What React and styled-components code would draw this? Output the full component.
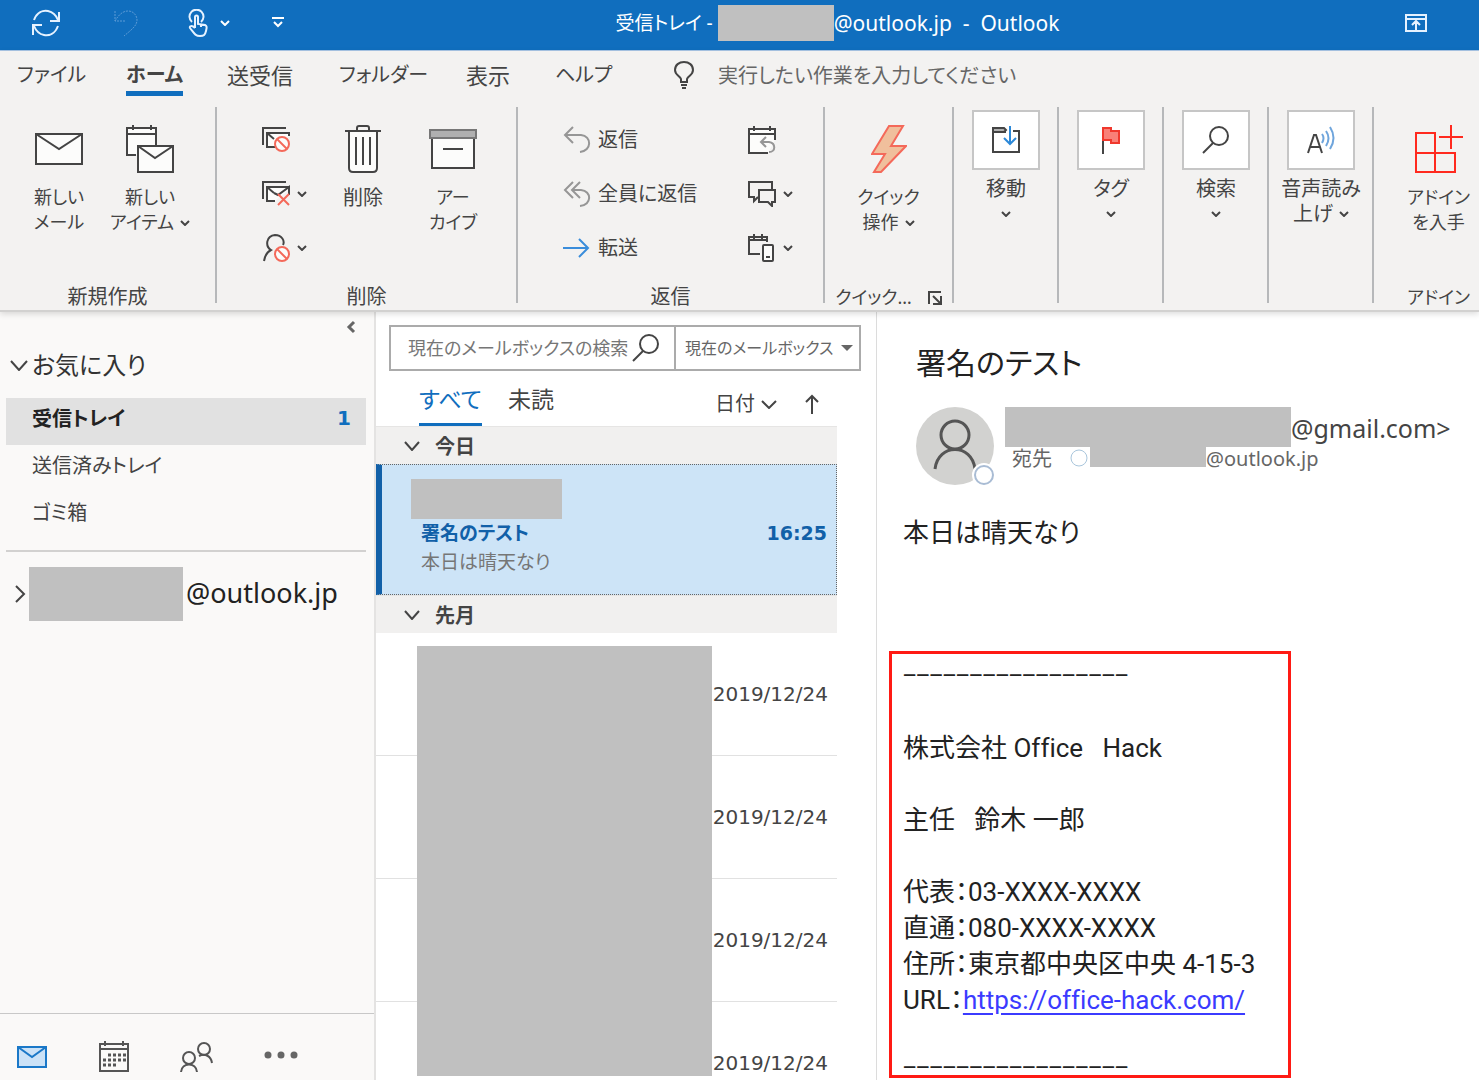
import React from "react";
import styled, { createGlobalStyle, css } from "styled-components";

const INK = "#444444";
const BLUE = "#106ebe";
const MASK = "#c0c0c0";

const GlobalStyle = createGlobalStyle`
  *, *::before, *::after { box-sizing: border-box; }
  body {
    margin: 0;
    overflow: hidden;
    background: #ffffff;
    color: ${INK};
    font-family: "Noto Sans", "Noto Sans CJK JP", sans-serif;
    font-size: 20px;
    font-feature-settings: "palt";
  }
  button, input, select {
    margin: 0;
    padding: 0;
    border: 0;
    background: none;
    color: inherit;
    font-family: inherit;
    font-size: inherit;
    font-feature-settings: "palt";
  }
  p, h1, h2, ul { margin: 0; padding: 0; font-weight: 400; }
  ul { list-style: none; }
  svg { display: block; flex: none; }
`;

const Page = styled.div`
  display: flex;
  flex-direction: column;
  height: 100vh;
`;

/* ---------- title bar ---------- */

const TitleBar = styled.header`
  display: flex;
  align-items: center;
  height: 51px;
  padding-bottom: 5px;
  background: ${BLUE};
  border-bottom: 1px solid #a9c6e6;
  color: #ffffff;
`;

const QuickTools = styled.div`
  display: flex;
  align-items: center;
  padding: 0 8px 0 30px;
`;

const ToolButton = styled.button`
  display: flex;
  align-items: center;
  gap: 12px;
  margin-right: ${(p) => p.$gap}px;
`;

const WindowTitle = styled.h1`
  flex: 1;
  display: flex;
  align-items: center;
  justify-content: center;
  font-size: 21px;
  line-height: 36px;
  white-space: pre;
`;

const TitleFolder = styled.span`
  font-size: 19px;
`;

const Masked = styled.span`
  flex: none;
  width: ${(p) => p.$w}px;
  height: ${(p) => p.$h}px;
  background: ${MASK};
`;

const RibbonToggle = styled.button`
  display: flex;
  margin: 0 52px 0 22px;
`;

/* ---------- ribbon ---------- */

const Ribbon = styled.section`
  position: relative;
  z-index: 1;
  flex: none;
  background: #f3f2f1;
  border-bottom: 2px solid #d2d1d0;
  box-shadow: 0 2px 6px rgba(0, 0, 0, 0.14);
`;

const TabBar = styled.nav`
  display: flex;
  align-items: flex-start;
  height: 56px;
  padding: 8px 17px 0;
`;

const TabCell = styled.div`
  width: ${(p) => p.$w}px;
  display: flex;
`;

const Tab = styled.button`
  height: 37px;
  padding-bottom: 5px;
  line-height: 32px;
  font-size: ${(p) => (p.$kana ? 20 : 22)}px;
  white-space: nowrap;
  ${(p) =>
    p.$on &&
    css`
      padding-bottom: 0;
      font-weight: 700;
      border-bottom: 5px solid ${BLUE};
    `}
`;

const TellMe = styled.label`
  flex: 1;
  display: flex;
  align-items: center;
  gap: 24px;
  height: 32px;
`;

const TellMeInput = styled.input`
  flex: 1;
  height: 32px;
  font-size: 20px;
  &::placeholder {
    color: #666666;
    opacity: 1;
  }
`;

const Groups = styled.div`
  display: flex;
  height: 203px;
  padding-bottom: 7px;
`;

const Group = styled.div`
  flex: 0 0 ${(p) => p.$w}px;
  display: flex;
  flex-direction: column;
  border-right: 2px solid #b6b8ba;
`;

const LastGroup = styled(Group)`
  flex: 1 0 104px;
  padding-left: 24px;
  border-right: 0;
`;

const GroupBody = styled.div`
  flex: 1;
  display: flex;
  justify-content: ${(p) => p.$justify || "center"};
  padding: ${(p) => p.$pad || "0"};
`;

const GroupLabel = styled.div`
  display: flex;
  align-items: flex-start;
  justify-content: center;
  gap: 16px;
  height: 16px;
  font-size: ${(p) => (p.$kana ? 18 : 20)}px;
  line-height: 20px;
  white-space: nowrap;
`;

const LauncherButton = styled.button`
  display: flex;
  padding-top: 4px;
`;

const BigButton = styled.button`
  display: flex;
  flex-direction: column;
  align-items: center;
  width: ${(p) => p.$w || 90}px;
  padding-top: 17px;
  font-size: ${(p) => (p.$kana ? 18 : 20)}px;
  line-height: 25px;
  white-space: nowrap;
`;

const BigIcon = styled.span`
  display: flex;
  align-items: center;
  justify-content: center;
  height: 50px;
  margin-bottom: 11px;
`;

const LabelLine = styled.span`
  display: flex;
  align-items: center;
  gap: 6px;
  height: 25px;
`;

const SmallColumn = styled.div`
  display: flex;
  flex-direction: column;
  gap: 22px;
  width: ${(p) => p.$w}px;
  padding-top: 17px;
`;

const SmallButton = styled.button`
  display: flex;
  align-items: center;
  gap: 7px;
  height: 32px;
  line-height: 32px;
  white-space: nowrap;
`;

const BoxButton = styled.button`
  display: flex;
  flex-direction: column;
  align-items: center;
  padding: 3px 0 0 1px;
  line-height: 25px;
  white-space: nowrap;
`;

const IconBox = styled.span`
  display: flex;
  align-items: center;
  justify-content: center;
  width: 68px;
  height: 60px;
  margin-bottom: 6px;
  background: #ffffff;
  border: 2px solid #c6c6c6;
`;

/* ---------- folder pane ---------- */

const Workspace = styled.main`
  flex: 1;
  display: flex;
  min-height: 0;
`;

const FolderPane = styled.aside`
  flex: 0 0 376px;
  display: flex;
  flex-direction: column;
  background: #faf9f8;
  border-right: 2px solid #e4e3e2;
`;

const CollapseRow = styled.div`
  display: flex;
  justify-content: flex-end;
  padding: 8px 18px 0 0;
`;

const SectionToggle = styled.button`
  display: flex;
  align-items: center;
  gap: 4px;
  margin: 13px 0 15px 10px;
  color: #333333;
  font-size: 24px;
  line-height: 36px;
`;

const Folder = styled.button`
  display: flex;
  align-items: center;
  justify-content: space-between;
  width: 360px;
  height: 47px;
  margin-left: 6px;
  padding: 0 15px 8px 26px;
  font-size: 20px;
  ${(p) =>
    p.$on &&
    css`
      background: #e1e1e1;
      color: #222222;
      font-weight: 700;
    `}
`;

const Count = styled.span`
  color: ${BLUE};
  font-family: "DejaVu Sans", sans-serif;
`;

const Account = styled.button`
  display: flex;
  align-items: center;
  width: 360px;
  margin: 11px 0 0 6px;
  padding: 15px 0 0 8px;
  border-top: 2px solid #d2d1d0;
  color: #222222;
  font-size: 27px;
`;

const AccountName = styled.span`
  padding: 0 0 4px 3px;
`;

const ModuleBar = styled.nav`
  display: flex;
  align-items: center;
  height: 67px;
  margin-top: auto;
  padding: 20px 0 0 16px;
  gap: 50px;
  border-top: 1px solid #c8c8c8;
`;

const ModuleButton = styled.button`
  display: flex;
`;

/* ---------- message list ---------- */

const ListPane = styled.section`
  flex: 0 0 501px;
  overflow: hidden;
  border-right: 1px solid #dcdcdc;
`;

const SearchRow = styled.div`
  display: flex;
  height: 46px;
  margin: 13px 15px 0 13px;
  border: 2px solid #ababab;
`;

const SearchField = styled.label`
  flex: 1;
  display: flex;
  align-items: center;
  min-width: 0;
  padding: 0 14px 0 17px;
`;

const SearchInput = styled.input`
  flex: 1;
  min-width: 0;
  height: 42px;
  font-size: 18px;
  &::placeholder {
    color: #767676;
    opacity: 1;
  }
`;

const ScopeField = styled.label`
  display: flex;
  align-items: center;
  width: 185px;
  padding: 0 6px 0 9px;
  border-left: 2px solid #ababab;
`;

const ScopeSelect = styled.select`
  flex: 1;
  min-width: 0;
  height: 40px;
  appearance: none;
  color: #666666;
  font-size: 16px;
`;

const FilterRow = styled.div`
  display: flex;
  align-items: flex-start;
  height: 55px;
  padding: 8px 57px 0 43px;
`;

const Filter = styled.button`
  height: 47px;
  margin-right: 26px;
  padding-bottom: 7px;
  font-size: 23px;
  line-height: 40px;
  border-bottom: 3px solid ${(p) => (p.$on ? BLUE : "transparent")};
  color: ${(p) => (p.$on ? BLUE : INK)};
`;

const SortButton = styled.button`
  display: flex;
  align-items: center;
  gap: 6px;
  height: 50px;
  margin-left: ${(p) => (p.$push ? "auto" : "28px")};
  line-height: 48px;
`;

const DateHeader = styled.button`
  display: flex;
  align-items: center;
  gap: 15px;
  width: 461px;
  height: 38px;
  padding-left: 28px;
  background: #f1f0ef;
  border-top: 1px solid #e6e5e4;
  font-weight: 700;
`;

const SelectedMessage = styled.article`
  width: 461px;
  height: 131px;
  padding: 14px 9px 0 29px;
  background: #cde4f7;
  border: 1px dotted #666666;
  border-left: 6px solid #1160a8;
  font-size: 19px;
`;

const MessageLine = styled.div`
  display: flex;
  justify-content: space-between;
  padding-left: 10px;
  line-height: 29px;
  ${(p) =>
    p.$strong
      ? css`
          color: #1160a8;
          font-weight: 700;
        `
      : css`
          color: #767676;
        `}
`;

const Time = styled.time`
  font-family: "DejaVu Sans", sans-serif;
`;

const SenderMask = styled.div`
  width: 151px;
  height: 40px;
  background: ${MASK};
`;

const OlderMessages = styled.div`
  position: relative;
  width: 461px;
`;

const OlderMask = styled.div`
  position: absolute;
  top: 13px;
  left: 41px;
  width: 295px;
  height: 430px;
  background: ${MASK};
`;

const OlderRow = styled.div`
  display: flex;
  align-items: center;
  justify-content: flex-end;
  height: 123px;
  padding-right: 9px;
  border-bottom: 1px solid #e1e1e1;
  font-size: 20px;
`;

/* ---------- reading pane ---------- */

const Reader = styled.article`
  flex: 1;
  min-width: 0;
  overflow: hidden;
  padding: 31px 12px 0;
  color: #222222;
`;

const Subject = styled.h2`
  padding-left: 27px;
  font-size: 30px;
  line-height: 40px;
`;

const MessageHead = styled.div`
  display: flex;
  gap: 9px;
  margin: 23px 0 29px;
  padding-left: 27px;
  color: ${INK};
`;

const Addresses = styled.div`
  display: flex;
  flex-direction: column;
  padding-top: 1px;
`;

const FromLine = styled.div`
  display: flex;
  height: 40px;
  font-size: 25px;
  line-height: 43px;
`;

const ToLine = styled.div`
  display: flex;
  height: 20px;
  padding-left: 7px;
  color: #666666;
  line-height: 24px;
`;

const ToMark = styled.span`
  display: flex;
  padding: 2px 2px 0 18px;
`;

const BodyText = styled.p`
  font-family: Roboto, "Noto Sans CJK JP", sans-serif;
  font-size: 26px;
  font-variant-ligatures: none;
  line-height: 36px;
  white-space: pre;
`;

const Greeting = styled(BodyText)`
  padding-left: 14px;
`;

const Signature = styled.section`
  width: 402px;
  margin-top: 100px;
  padding: 13px 10px 0 11px;
  border: 3px solid #ff1a14;
`;

const Rule = styled.p`
  font-family: "DejaVu Sans Mono", monospace;
  font-size: 22px;
  line-height: 16px;
`;

const SignatureText = styled.div`
  display: flex;
  flex-direction: column;
  gap: 36px;
  padding: 47px 0 41px;
`;

const Link = styled.a`
  color: #3b3bff;
  text-decoration: underline;
  text-underline-offset: 4px;
`;

/* ---------- icons ---------- */

const Icon = ({ w, h, s = 2, c = INK, children }) => (
  <svg width={w} height={h} viewBox={`0 0 ${w} ${h}`} fill="none" stroke={c} strokeWidth={s} aria-hidden="true">
    {children}
  </svg>
);

const Chevron = ({ w = 10, h = 6, s = 2, c = INK }) => (
  <Icon w={w} h={h} s={s} c={c}>
    <path d={`M1 1L${w / 2} ${h - 1}L${w - 1} 1`} />
  </Icon>
);

const SyncIcon = () => (
  <Icon w={32} h={30} c="#e6f2ff">
    <path d="M4 12C7 4 13 2 18 3C23 4 26 7 28 12M29 4V13H20M28 18C25 26 19 28 14 27C9 26 6 23 4 18M3 27V17H12" />
  </Icon>
);

const UndoIcon = () => (
  <Icon w={26} h={28} s={1} c="#5c9bd6">
    <path strokeDasharray="2 1" d="M2 2V12H12M2 12C5 7 9 2 15 2C21 2 24 7 24 11C24 17 18 21 11 27" />
  </Icon>
);

const TouchIcon = () => (
  <Icon w={20} h={28} s={2} c="#e6f2ff">
    <path d="M4 13A7 7 0 1 1 13 13" />
    <path d="M7 19V8C7 6 10 6 10 8V15L17 16C19 17 19 18 18 22C17 26 16 27 12 27C7 27 6 24 2 19C1 17 4 16 7 19M13 15V18" />
  </Icon>
);

const CustomizeIcon = () => (
  <Icon w={12} h={11} c="#ffffff">
    <path d="M0 1H12M2 5L6 9L10 5" />
  </Icon>
);

const RibbonIcon = () => (
  <Icon w={22} h={18} c="#e6f2ff">
    <path d="M1 1H21V17H1ZM1 5H21M11 17V8M7 11L11 7L15 11" />
  </Icon>
);

const BulbIcon = () => (
  <Icon w={20} h={28}>
    <path d="M7 21V18C6 15 1 14 1 9C1 4 5 1 10 1S19 4 19 9C19 14 14 15 13 18V21ZM7 24H13M8 27H12" />
  </Icon>
);

const MailIcon = () => (
  <Icon w={48} h={34}>
    <path fill="#fcfcfb" d="M1 2H47V32H1Z" />
    <path d="M1 2L24 17L47 2" />
  </Icon>
);

const NewItemIcon = () => (
  <Icon w={48} h={48}>
    <path fill="#fcfcfb" d="M10 30H1V3H30V20M1 9H30M7 0V5M25 0V5" />
    <path fill="#fcfcfb" d="M12 21H47V47H12Z" />
    <path d="M12 21L29 33L47 21" />
  </Icon>
);

const Stack = () => (
  <>
    <path d="M1 18V1H24" />
    <path fill="#fcfcfb" d="M13 20H5V6H27V9" />
    <path d="M5 6L12 12" />
  </>
);

const Forbid = ({ y }) => (
  <g stroke="#f4695a">
    <circle cx="20" cy={y} r="7" fill="#fcfcfb" />
    <path d={`M15 ${y - 5}L25 ${y + 5}`} />
  </g>
);

const IgnoreIcon = () => (
  <Icon w={28} h={26}>
    <Stack />
    <Forbid y={17} />
  </Icon>
);

const CleanIcon = () => (
  <Icon w={28} h={26}>
    <Stack />
    <path d="M12 12L16 14L27 6V14" />
    <path stroke="#f4695a" d="M16 13L27 24M27 13L16 24" />
  </Icon>
);

const JunkIcon = () => (
  <Icon w={28} h={28}>
    <path d="M2 27C3 21 5 18 9 16C3 12 4 2 13 1C20 1 23 7 21 11" />
    <Forbid y={20} />
  </Icon>
);

const TrashIcon = () => (
  <Icon w={36} h={48}>
    <path fill="#fcfcfb" d="M4 6V43Q4 47 8 47H28Q32 47 32 43V6" />
    <path d="M0 6H36M12 6V3Q12 1 14 1H22Q24 1 24 3V6M11 12V40M18 12V40M25 12V40" />
  </Icon>
);

const ArchiveIcon = () => (
  <Icon w={48} h={42}>
    <path fill="#fcfcfb" d="M3 10H45V40H3Z" />
    <path fill="#b0b0b0" stroke="#777777" d="M1 2H47V10H1Z" />
    <path d="M14 21H34" />
  </Icon>
);

const ReplyIcon = () => (
  <Icon w={28} h={28} c="#969696">
    <path d="M10 1L2 9L10 17M2 9H18C29 10 29 25 17 26" />
  </Icon>
);

const ReplyAllIcon = () => (
  <Icon w={28} h={28} c="#969696">
    <path d="M10 2L2 10L10 18M17 2L9 10L17 18M9 10H18C29 11 29 25 17 26" />
  </Icon>
);

const ForwardIcon = () => (
  <Icon w={28} h={20} c="#3a8ddb">
    <path d="M0 10H25M16 1L25 10L16 19" />
  </Icon>
);

const MeetingIcon = () => (
  <Icon w={28} h={28}>
    <path fill="#fcfcfb" d="M20 27H1V3H27V14M1 8H27M6 0V5M22 0V5" />
    <path stroke="#969696" d="M18 11L13 16L18 21M13 16H21C28 17 28 26 21 26" />
  </Icon>
);

const ChatIcon = () => (
  <Icon w={28} h={26}>
    <path d="M10 16L6 20V16H1V1H24V8" />
    <path d="M11 9H27V21H24V25L20 21H11Z" />
  </Icon>
);

const DeviceIcon = () => (
  <Icon w={28} h={28}>
    <path d="M12 20H1V3H19V8M1 6H19M6 0V5M14 0V5" />
    <path fill="#fcfcfb" d="M16 11H24Q25 11 25 12V26Q25 27 24 27H16Q15 27 15 26V12Q15 11 16 11ZM18 23H22" />
  </Icon>
);

const BoltIcon = () => (
  <Icon w={36} h={48} c="#f4695a">
    <path fill="#f0bf9c" d="M18 1H32L20 21H35L10 47H3L14 29H1Z" />
  </Icon>
);

const LauncherIcon = () => (
  <Icon w={14} h={14}>
    <path d="M1 13V1H13M5 5L12 12M13 5V13H5" />
  </Icon>
);

const MoveIcon = () => (
  <Icon w={28} h={28}>
    <path d="M14 6H1V26H27V5H21" />
    <path fill="#b0b0b0" d="M1 6V2H12L14 4L12 6Z" />
    <path stroke="#2b88d8" d="M18 0V18M12 12L18 18L24 12" />
  </Icon>
);

const FlagIcon = () => (
  <Icon w={20} h={28}>
    <path d="M2 1V28" />
    <path stroke="#f0382d" fill="#f98078" d="M2 2H10V5H18V17H10V14H2Z" />
  </Icon>
);

const SearchIcon = () => (
  <Icon w={28} h={28}>
    <circle cx="17" cy="10" r="9" />
    <path d="M11 17L1 27" />
  </Icon>
);

const SpeakIcon = () => (
  <Icon w={28} h={28}>
    <path d="M1 27L7 9H9L15 27M3 21H13" />
    <path stroke="#6fa5dc" d="M15 8Q18 12 15 17M19 5Q24 12 19 20M23 1Q30 12 23 23" />
  </Icon>
);

const AddinIcon = () => (
  <Icon w={50} h={50} c="#ff2a1f">
    <path d="M2 9H21V48H2ZM2 29H41V48H21M37 1V25M25 13H49" />
  </Icon>
);

const NavMailIcon = () => (
  <Icon w={32} h={24} c="#1a78c8">
    <path fill="#cbe2f7" d="M2 2H30V22H2Z" />
    <path d="M2 2L16 12L30 2" />
  </Icon>
);

const NavCalendarIcon = () => (
  <Icon w={32} h={32} c="#555555">
    <path d="M2 3H30V30H2ZM2 8H30M7 0V5M25 0V5" />
    <path strokeWidth="3" strokeDasharray="3 2" d="M10 14H28M5 19H28M5 24H18" />
  </Icon>
);

const NavPeopleIcon = () => (
  <Icon w={34} h={32} c="#555555">
    <circle cx="9" cy="17" r="6" />
    <path d="M1 31C2 21 16 21 17 31" />
    <circle cx="24" cy="8" r="6" />
    <path d="M19 15C25 12 31 15 32 22" />
  </Icon>
);

const NavMoreIcon = () => (
  <Icon w={34} h={12} s={0}>
    <g fill="#666666">
      <circle cx="4" cy="4" r="3.5" />
      <circle cx="17" cy="4" r="3.5" />
      <circle cx="30" cy="4" r="3.5" />
    </g>
  </Icon>
);

const Avatar = () => (
  <Icon w={80} h={80} s={3} c="#555555">
    <circle cx="39" cy="40" r="39" fill="#d2d2d0" stroke="none" />
    <circle cx="39" cy="29" r="14" />
    <path d="M19 63C22 37 56 37 59 63" />
    <circle cx="68" cy="69" r="12" fill="#ffffff" stroke="none" />
    <circle cx="68" cy="69" r="9" strokeWidth="2" stroke="#a9bcd4" />
  </Icon>
);

/* ---------- screen ---------- */

const TABS = [
  { name: "ファイル", w: 109, kana: true },
  { name: "ホーム", w: 101, kana: true, on: true },
  { name: "送受信", w: 112 },
  { name: "フォルダー", w: 127, kana: true },
  { name: "表示", w: 89 },
  { name: "ヘルプ", w: 119, kana: true },
];

const BOXED = [
  ["移動", MoveIcon],
  ["タグ", FlagIcon],
  ["検索", SearchIcon],
  ["音声読み", SpeakIcon, "上げ"],
];

const OLDER = ["2019/12/24", "2019/12/24", "2019/12/24", "2019/12/24"];

const RULE = "−".repeat(17);

const Big = ({ icon, lines, menu, w, kana }) => (
  <BigButton $w={w} $kana={kana}>
    <BigIcon>{icon}</BigIcon>
    {lines.map((line, i) => (
      <LabelLine key={line}>
        {line}
        {menu && i === lines.length - 1 && <Chevron />}
      </LabelLine>
    ))}
  </BigButton>
);

export default function App() {
  return (
    <Page>
      <GlobalStyle />
      <TitleBar>
        <QuickTools>
          <ToolButton $gap={51} aria-label="同期"><SyncIcon /></ToolButton>
          <ToolButton $gap={49} aria-label="元に戻す"><UndoIcon /></ToolButton>
          <ToolButton $gap={42} aria-label="タッチ"><TouchIcon /><Chevron c="#ffffff" /></ToolButton>
          <ToolButton $gap={0} aria-label="カスタマイズ"><CustomizeIcon /></ToolButton>
        </QuickTools>
        <WindowTitle>
          <TitleFolder>{"受信トレイ - "}</TitleFolder>
          <Masked $w={116} $h={36} />
          {"@outlook.jp  -  Outlook"}
        </WindowTitle>
        <RibbonToggle aria-label="リボン"><RibbonIcon /></RibbonToggle>
      </TitleBar>

      <Ribbon>
        <TabBar>
          {TABS.map((tab) => (
            <TabCell key={tab.name} $w={tab.w}>
              <Tab $on={tab.on} $kana={tab.kana}>{tab.name}</Tab>
            </TabCell>
          ))}
          <TellMe>
            <BulbIcon />
            <TellMeInput placeholder="実行したい作業を入力してください" />
          </TellMe>
        </TabBar>

        <Groups>
          <Group $w={217}>
            <GroupBody $justify="flex-start" $pad="0 0 0 14px">
              <Big kana w={90} icon={<MailIcon />} lines={["新しい", "メール"]} />
              <Big kana w={92} icon={<NewItemIcon />} lines={["新しい", "アイテム"]} menu />
            </GroupBody>
            <GroupLabel>新規作成</GroupLabel>
          </Group>

          <Group $w={301}>
            <GroupBody $justify="flex-start" $pad="0 0 0 45px">
              <SmallColumn $w={56}>
                <SmallButton aria-label="無視"><IgnoreIcon /></SmallButton>
                <SmallButton aria-label="クリーンアップ"><CleanIcon /><Chevron /></SmallButton>
                <SmallButton aria-label="迷惑メール"><JunkIcon /><Chevron /></SmallButton>
              </SmallColumn>
              <Big w={90} icon={<TrashIcon />} lines={["削除"]} />
              <Big kana w={90} icon={<ArchiveIcon />} lines={["アー", "カイブ"]} />
            </GroupBody>
            <GroupLabel>削除</GroupLabel>
          </Group>

          <Group $w={307}>
            <GroupBody $justify="flex-start" $pad="0 0 0 45px">
              <SmallColumn $w={185}>
                <SmallButton><ReplyIcon />返信</SmallButton>
                <SmallButton><ReplyAllIcon />全員に返信</SmallButton>
                <SmallButton><ForwardIcon />転送</SmallButton>
              </SmallColumn>
              <SmallColumn $w={56}>
                <SmallButton aria-label="会議"><MeetingIcon /></SmallButton>
                <SmallButton aria-label="チャット"><ChatIcon /><Chevron /></SmallButton>
                <SmallButton aria-label="その他"><DeviceIcon /><Chevron /></SmallButton>
              </SmallColumn>
            </GroupBody>
            <GroupLabel>返信</GroupLabel>
          </Group>

          <Group $w={129}>
            <GroupBody>
              <Big kana w={90} icon={<BoltIcon />} lines={["クイック", "操作"]} menu />
            </GroupBody>
            <GroupLabel $kana>
              クイック…
              <LauncherButton aria-label="クイック操作の管理"><LauncherIcon /></LauncherButton>
            </GroupLabel>
          </Group>

          {BOXED.map(([name, Glyph, second]) => (
            <Group key={name} $w={105}>
              <GroupBody>
                <BoxButton>
                  <IconBox><Glyph /></IconBox>
                  {name}
                  <LabelLine>{second}<Chevron /></LabelLine>
                </BoxButton>
              </GroupBody>
            </Group>
          ))}

          <LastGroup>
            <GroupBody>
              <Big kana w={80} icon={<AddinIcon />} lines={["アドイン", "を入手"]} />
            </GroupBody>
            <GroupLabel $kana>アドイン</GroupLabel>
          </LastGroup>
        </Groups>
      </Ribbon>

      <Workspace>
        <FolderPane>
          <CollapseRow>
            <ModuleButton aria-label="折りたたむ">
              <Icon w={10} h={14} s={3} c="#666666"><path d="M8 2L3 7L8 12" /></Icon>
            </ModuleButton>
          </CollapseRow>
          <SectionToggle><Chevron w={18} h={11} />お気に入り</SectionToggle>
          <Folder $on>受信トレイ<Count>1</Count></Folder>
          <Folder>送信済みトレイ</Folder>
          <Folder>ゴミ箱</Folder>
          <Account>
            <Icon w={15} h={20} s={2}><path d="M2 2L10 10L2 18" /></Icon>
            <Masked $w={154} $h={54} />
            <AccountName>@outlook.jp</AccountName>
          </Account>
          <ModuleBar>
            <ModuleButton aria-label="メール"><NavMailIcon /></ModuleButton>
            <ModuleButton aria-label="予定表"><NavCalendarIcon /></ModuleButton>
            <ModuleButton aria-label="連絡先"><NavPeopleIcon /></ModuleButton>
            <ModuleButton aria-label="その他"><NavMoreIcon /></ModuleButton>
          </ModuleBar>
        </FolderPane>

        <ListPane>
          <SearchRow>
            <SearchField>
              <SearchInput placeholder="現在のメールボックスの検索" />
              <SearchIcon />
            </SearchField>
            <ScopeField>
              <ScopeSelect aria-label="検索範囲" defaultValue="box">
                <option value="box">現在のメールボックス</option>
              </ScopeSelect>
              <Icon w={12} h={6} s={0}><path fill="#666666" d="M0 0H12L6 6Z" /></Icon>
            </ScopeField>
          </SearchRow>
          <FilterRow>
            <Filter $on>すべて</Filter>
            <Filter>未読</Filter>
            <SortButton $push>日付<Chevron w={16} h={9} /></SortButton>
            <SortButton aria-label="昇順">
              <Icon w={14} h={20}><path d="M7 20V2M1 8L7 2L13 8" /></Icon>
            </SortButton>
          </FilterRow>
          <DateHeader><Chevron w={16} h={10} />今日</DateHeader>
          <SelectedMessage>
            <SenderMask />
            <MessageLine $strong><span>署名のテスト</span><Time>16:25</Time></MessageLine>
            <MessageLine>本日は晴天なり</MessageLine>
          </SelectedMessage>
          <DateHeader><Chevron w={16} h={10} />先月</DateHeader>
          <OlderMessages>
            {OLDER.map((date, i) => (
              <OlderRow key={i}><Time>{date}</Time></OlderRow>
            ))}
            <OlderMask />
          </OlderMessages>
        </ListPane>

        <Reader>
          <Subject>署名のテスト</Subject>
          <MessageHead>
            <Avatar />
            <Addresses>
              <FromLine><Masked $w={286} $h={40} />@gmail.com&gt;</FromLine>
              <ToLine>
                宛先
                <ToMark>
                  <Icon w={18} h={18} s={1} c="#a9c6dc"><circle cx="9" cy="9" r="8" /></Icon>
                </ToMark>
                <Masked $w={116} $h={20} />
                @outlook.jp
              </ToLine>
            </Addresses>
          </MessageHead>
          <Greeting>本日は晴天なり</Greeting>
          <Signature>
            <Rule>{RULE}</Rule>
            <SignatureText>
              <BodyText>株式会社 Office   Hack</BodyText>
              <BodyText>主任   鈴木 一郎</BodyText>
              <div>
                <BodyText>代表：03-XXXX-XXXX</BodyText>
                <BodyText>直通：080-XXXX-XXXX</BodyText>
                <BodyText>住所：東京都中央区中央 4-15-3</BodyText>
                <BodyText>URL：<Link href="https://office-hack.com/">https://office-hack.com/</Link></BodyText>
              </div>
            </SignatureText>
            <Rule>{RULE}</Rule>
          </Signature>
        </Reader>
      </Workspace>
    </Page>
  );
}
